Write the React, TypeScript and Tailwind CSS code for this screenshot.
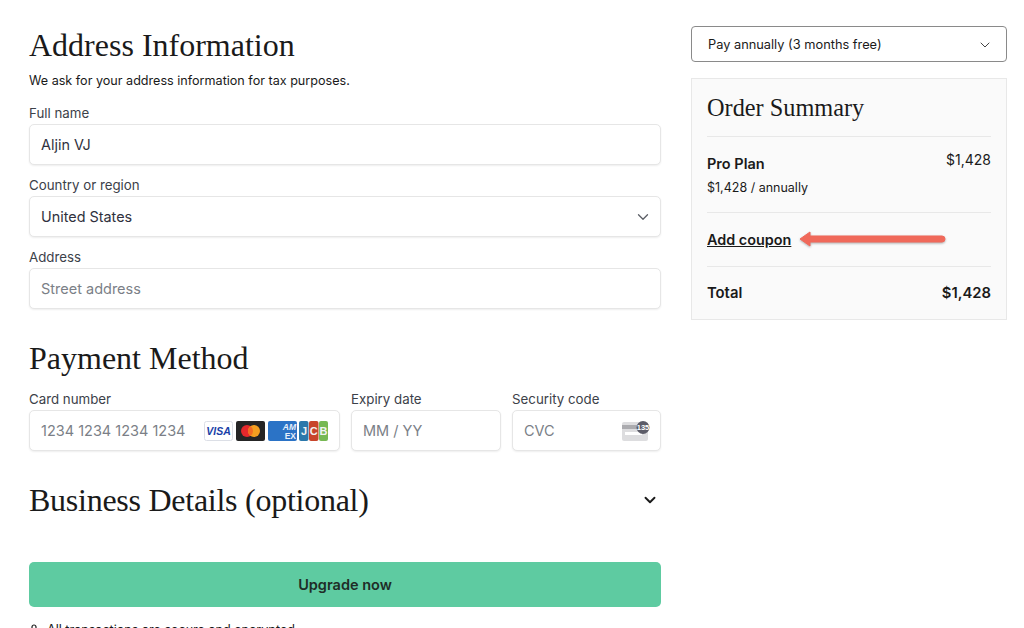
import type { ReactNode } from 'react'
import { ChevronDown } from 'lucide-react'

const serif = "font-['Liberation_Serif',serif]"

function Field({ label, value, placeholder, className, children }: { label: string; value?: string; placeholder?: string; className?: string; children?: ReactNode }) {
  return (
    <div className={className}>
      <div className="h-[18px] text-[13.3px] leading-[20px] text-[#3c4149]">{label}</div>
      <div className="mt-[3px] flex h-[41px] items-center justify-between rounded-[5px] border border-[#e6e6e6] bg-white pl-[11px] pr-[11px] shadow-[0_1px_2px_rgba(0,0,0,0.07)]">
        <span className={value ? 'text-[14.4px] text-[#30313d]' : 'text-[14.5px] text-[#7b7f87]'}>{value ?? placeholder}</span>
        {children}
      </div>
    </div>
  )
}

function CardBrands() {
  return (
    <div className="flex items-center gap-[3px]">
      <svg width="29" height="20" viewBox="0 0 29 20" className="ml-[-1px]">
        <rect x="0.5" y="0.5" width="28" height="19" rx="2" fill="#fff" stroke="#dcdfe6" />
        <text x="14.5" y="14" textAnchor="middle" fontSize="10.5" fontWeight="800" fontStyle="italic" fill="#1a3fa8" fontFamily="Liberation Sans">VISA</text>
      </svg>
      <svg width="29" height="20" viewBox="0 0 29 20">
        <rect width="29" height="20" rx="2" fill="#252525" />
        <circle cx="11" cy="10" r="6" fill="#e5282c" />
        <circle cx="18" cy="10" r="6" fill="#f49f20" />
        <path d="M14.5 5.1a6 6 0 0 1 0 9.8a6 6 0 0 1 0-9.8z" fill="#f26a22" />
      </svg>
      <svg width="29" height="20" viewBox="0 0 29 20" className="mr-[-1px]">
        <rect width="29" height="20" rx="2" fill="#2b73c6" />
        <text x="28" y="9" textAnchor="end" fontSize="8.5" fontWeight="800" fontStyle="italic" fill="#e8f0fa" fontFamily="Liberation Sans">AM</text>
        <text x="28" y="17.5" textAnchor="end" fontSize="8.5" fontWeight="800" fill="#e8f0fa" fontFamily="Liberation Sans">EX</text>
      </svg>
      <svg width="29" height="20" viewBox="0 0 29 20">
        <rect x="0" width="9.5" height="20" rx="2" fill="#2b78ab" />
        <rect x="10" width="9.5" height="20" rx="2" fill="#c8452b" />
        <rect x="20" width="9" height="20" rx="2" fill="#77b853" />
        <text x="5" y="14" textAnchor="middle" fontSize="11" fontWeight="700" fill="#f2f2f2" fontFamily="Liberation Sans">J</text>
        <text x="14.8" y="14" textAnchor="middle" fontSize="11" fontWeight="700" fill="#f2f2f2" fontFamily="Liberation Sans">C</text>
        <text x="24.5" y="14" textAnchor="middle" fontSize="11" fontWeight="700" fill="#f2f2f2" fontFamily="Liberation Sans">B</text>
      </svg>
    </div>
  )
}

function CvcIcon() {
  return (
    <svg width="28" height="20" viewBox="0 0 28 20" className="mr-[-0.5px]">
      <rect x="0" y="1" width="26" height="19" rx="2" fill="#dddddf" />
      <rect x="0" y="4" width="26" height="4" fill="#ababaf" />
      <rect x="3" y="11" width="17" height="3" fill="#fff" />
      <circle cx="21" cy="6.5" r="6.5" fill="#5c5c68" />
      <text x="21" y="9.2" textAnchor="middle" fontSize="7.5" fontWeight="700" fill="#fff" fontFamily="Liberation Sans">135</text>
    </svg>
  )
}

export default function App() {
  return (
    <div className="flex h-[628px] w-[1024px] gap-[30px] overflow-hidden bg-white pl-[29px] pt-[26px] font-['Inter',sans-serif] text-[#1a1a1a]">
      <div className="w-[632px] shrink-0">
        <h1 className={`${serif} h-[38px] text-[32px] leading-[38px] text-[#1a1a1a]`}>Address Information</h1>
        <p className="mt-[8px] text-[12.6px] leading-[18px] text-[#1a1a1a]">We ask for your address information for tax purposes.</p>

        <Field className="mt-[13px]" label="Full name" value="Aljin VJ" />
        <Field className="mt-[10px]" label="Country or region" value="United States">
          <ChevronDown size={18} strokeWidth={1.75} className="mr-[-3px] text-[#5c5f66]" />
        </Field>
        <Field className="mt-[10px]" label="Address" placeholder="Street address" />

        <h2 className={`${serif} mt-[30px] h-[38px] text-[32px] leading-[38px]`}>Payment Method</h2>
        <div className="mt-[12px] flex gap-[11px]">
          <Field className="w-[311px] shrink-0" label="Card number" placeholder="1234 1234 1234 1234">
            <CardBrands />
          </Field>
          <Field className="w-[150px] shrink-0" label="Expiry date" placeholder="MM / YY" />
          <Field className="min-w-0 flex-1" label="Security code" placeholder="CVC">
            <CvcIcon />
          </Field>
        </div>

        <div className="mt-[30px] flex h-[38px] items-center justify-between">
          <h2 className={`${serif} text-[32px] leading-[38px] tracking-[-0.26px]`}>Business Details (optional)</h2>
          <ChevronDown size={18} strokeWidth={2.5} className="mr-[2px] text-[#1a1a1a]" />
        </div>

        <button className="mt-[43px] flex h-[45px] w-full items-center justify-center rounded-[5px] bg-[#5ecba1] text-[14.5px] font-semibold text-[#1f2d27]">
          Upgrade now
        </button>
        <div className="mt-[14px] flex items-start gap-[9px] text-[12.6px] leading-[18px]">
          <svg width="8" height="11" viewBox="0 0 8 11" className="ml-[1px] mt-[3px] shrink-0">
            <path d="M2 5V3a2 2 0 0 1 4 0v2" fill="none" stroke="#1a1a1a" strokeWidth="1.2" />
            <rect x="0.5" y="5" width="7" height="6" rx="1" fill="#1a1a1a" />
          </svg>
          <span>All transactions are secure and encrypted</span>
        </div>
      </div>

      <div className="w-[316px] shrink-0">
        <div className="flex h-[36px] items-center justify-between rounded-[4px] border border-[#8a8a8a] bg-white pl-[16px] pr-[15px] pt-[1px] text-[12.8px] text-[#1a1a1a]">
          <span>Pay annually (3 months free)</span>
          <ChevronDown size={16} strokeWidth={1.5} className="mr-[-2px] text-[#444]" />
        </div>
        <div className="mt-[16px] border border-[#e8e8e8] bg-[#fafafa] px-[15px]">
          <h3 className={`${serif} flex h-[58px] items-center border-b border-[#e8e8e8] pt-[2px] text-[24.3px]`}>Order Summary</h3>
          <div className="h-[76px] border-b border-[#e8e8e8] pt-[15px]">
            <div className="flex items-start justify-between">
              <span className="mt-[2px] text-[14.5px] font-semibold leading-[20px]">Pro Plan</span>
              <span className="mt-[-1px] text-[14px] leading-[18px]">$1,428</span>
            </div>
            <div className="mt-[5px] text-[12.5px] leading-[18px]">$1,428 / annually</div>
          </div>
          <div className="relative flex h-[54px] items-center border-b border-[#e8e8e8]">
            <a className="text-[14.4px] font-semibold underline">Add coupon</a>
            <svg width="150" height="20" viewBox="0 0 150 20" className="absolute left-[92px] top-[16px] drop-shadow-[0_1px_1px_rgba(0,0,0,0.3)]">
              <path d="M1 10 L11 3 L11 7 L143 7 a3 3 0 0 1 0 6 L11 13 L11 17 Z" fill="#f0695a" stroke="#f0695a" strokeLinejoin="round" />
            </svg>
          </div>
          <div className="flex h-[52px] items-center justify-between pt-[1px] text-[14.8px] font-semibold">
            <span>Total</span>
            <span>$1,428</span>
          </div>
        </div>
      </div>
    </div>
  )
}
